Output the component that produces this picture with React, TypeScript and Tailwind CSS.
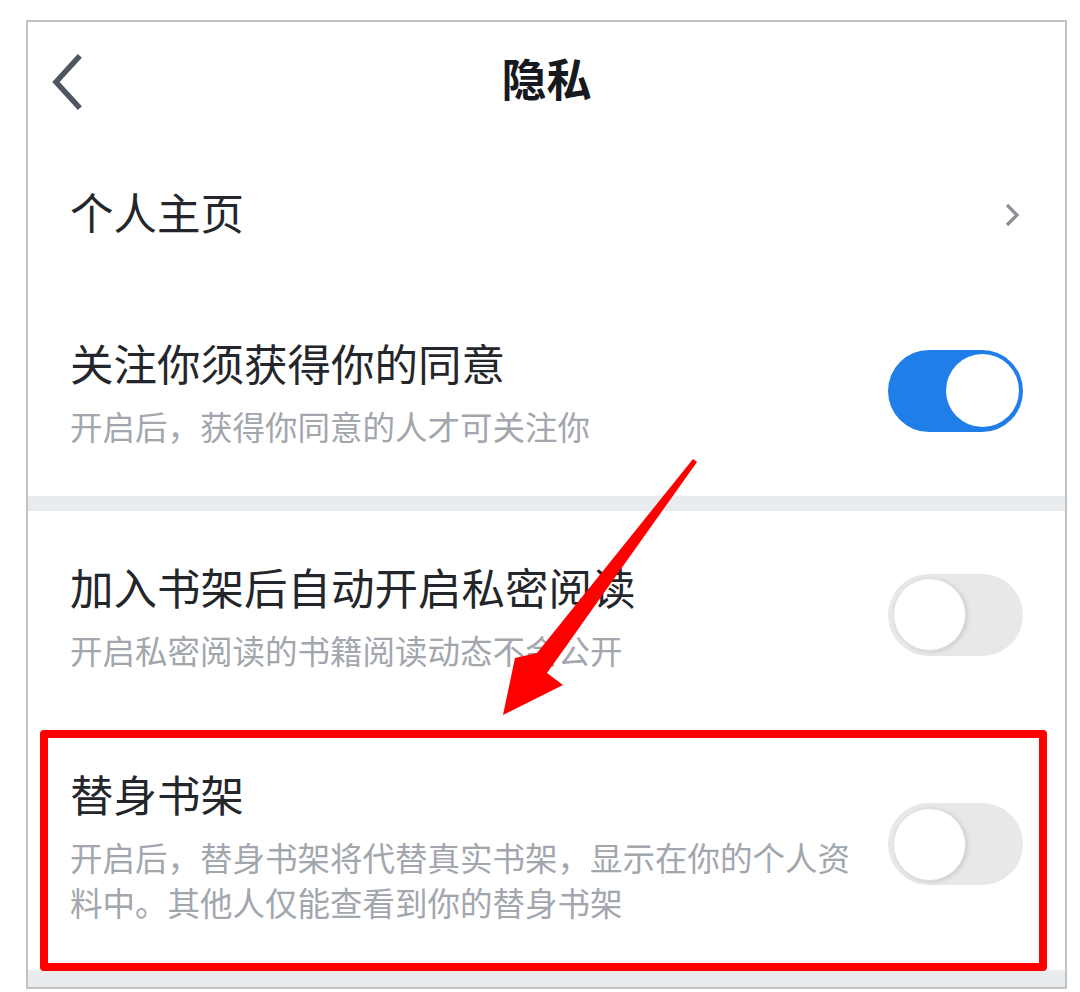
const FONT = { fontFamily: '"Noto Sans CJK SC", "Noto Sans", sans-serif' }

function Toggle({ on }: { on: boolean }) {
  return (
    <div
      className={`mb-[7px] flex h-[82px] w-[135px] shrink-0 items-center rounded-full p-[4.5px] ${
        on ? 'justify-end bg-[#1f7ee8]' : 'justify-start bg-[#e8e8e8]'
      }`}
    >
      <div
        className={`h-[73px] w-[73px] rounded-full bg-white ${
          on ? '' : 'border border-[#dedede] shadow-[2px_1px_4px_rgba(0,0,0,0.12)]'
        }`}
      />
    </div>
  )
}

interface RowProps {
  title: string
  sub: string
  on: boolean
  height: string
}

function SwitchRow({ title, sub, on, height }: RowProps) {
  return (
    <div className={`flex items-center justify-between px-[42px] ${height}`}>
      <div className="w-[800px]">
        <div className="text-[43.5px] leading-[46px] text-[#23262b]">{title}</div>
        <div className="mt-[17px] text-[32.5px] leading-[45px] text-[#a2a6ad]">{sub}</div>
      </div>
      <Toggle on={on} />
    </div>
  )
}

export default function App() {
  return (
    <div className="relative h-[992px] w-[1080px] bg-white pl-[26px] pt-[20px]" style={FONT}>
      <div className="flex h-[969px] w-[1041px] flex-col border-2 border-[#c2c2c2]">
        {/* header */}
        <div className="relative flex h-[116px] shrink-0 items-center justify-center">
          <svg className="absolute left-[20px] top-[32px]" width="36" height="56" viewBox="0 0 36 56">
            <path d="M30 4 L8 28 L30 52" fill="none" stroke="#4f5661" strokeWidth="5.5" strokeLinecap="square" />
          </svg>
          <div className="mb-[6px] text-[45px] font-bold leading-none text-[#16191d]">隐私</div>
        </div>

        {/* 个人主页 */}
        <div className="flex h-[154px] shrink-0 items-center justify-between px-[42px]">
          <div className="mb-[6px] text-[43.5px] leading-[52px] text-[#23262b]">个人主页</div>
          <svg width="18" height="26" viewBox="0 0 18 26" className="mr-[2px]">
            <path d="M4 3 L14 13 L4 23" fill="none" stroke="#8b9097" strokeWidth="3.2" />
          </svg>
        </div>

        <SwitchRow
          title="关注你须获得你的同意"
          sub="开启后，获得你同意的人才可关注你"
          on
          height="h-[204px] shrink-0"
        />

        <div className="h-[15px] shrink-0 bg-[#e9ecef]" />

        <SwitchRow
          title="加入书架后自动开启私密阅读"
          sub="开启私密阅读的书籍阅读动态不会公开"
          on={false}
          height="h-[214px] shrink-0"
        />

        <SwitchRow
          title="替身书架"
          sub="开启后，替身书架将代替真实书架，显示在你的个人资料中。其他人仅能查看到你的替身书架"
          on={false}
          height="h-[245px] shrink-0"
        />

        <div className="h-[17px] shrink-0 bg-[#e9ecef]" />
      </div>

      {/* annotation: red box */}
      <div className="absolute left-[40px] top-[730px] h-[241px] w-[1007px] rounded-[4px] border-[8.5px] border-[#ff0000]" />

      {/* annotation: red arrow */}
      <svg className="absolute left-0 top-0" width="1080" height="992" viewBox="0 0 1080 992">
        <polygon
          points="693,459 697,462 547,673 563,685 503,715 515,658 537,653"
          fill="#ff0000"
        />
      </svg>
    </div>
  )
}
